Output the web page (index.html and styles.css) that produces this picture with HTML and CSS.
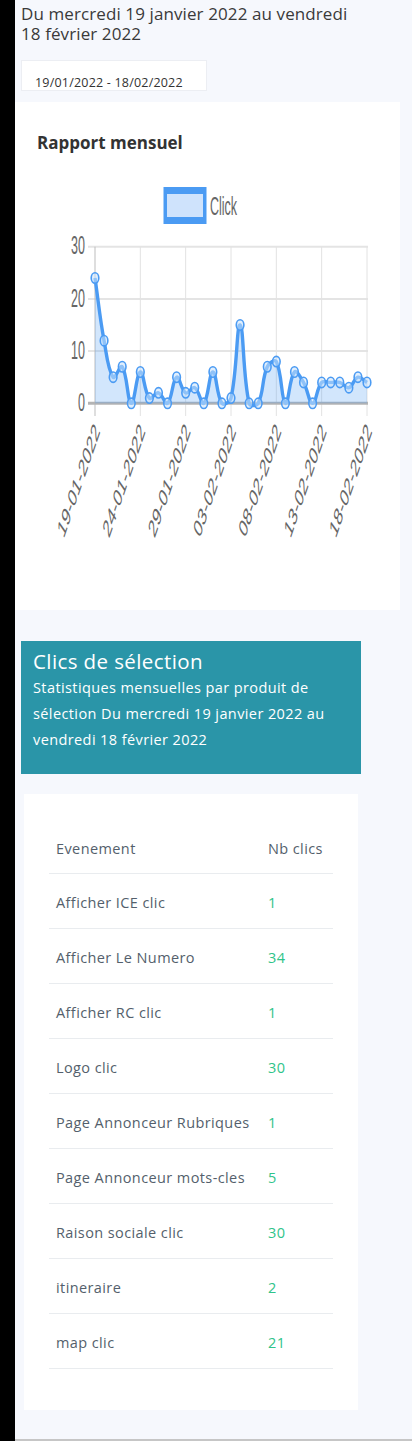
FILE: index.html
```html
<!DOCTYPE html>
<html lang="fr">
<head>
<meta charset="utf-8">
<meta name="viewport" content="width=device-width, initial-scale=1">
<title>Rapport mensuel</title>
<link rel="stylesheet" href="styles.css">
</head>
<body>
<div class="frame">
  <aside class="strip"></aside>
  <main class="main">
    <h1 class="period">Du mercredi 19 janvier 2022 au vendredi 18 février 2022</h1>
    <div class="range">19/01/2022 - 18/02/2022</div>

    <section class="card chart-card">
      <h2 class="card-title">Rapport mensuel</h2>
      <svg class="chart" id="chart" viewBox="15 170 385 400" xmlns="http://www.w3.org/2000/svg">
        <g class="legend">
          <rect x="163.5" y="187" width="43" height="37" class="legend-outer"/>
          <rect x="167" y="194" width="36" height="23" class="legend-inner"/>
          <text class="lbl" transform="translate(210,206) scale(1,2.05)" dy="0.36em">Click</text>
        </g>
        <g class="grid">
          <line x1="88" y1="246.7" x2="368" y2="246.7" class="gh"/>
          <line x1="88" y1="298.9" x2="368" y2="298.9" class="gh"/>
          <line x1="88" y1="351.1" x2="368" y2="351.1" class="gh"/>
          <line x1="140.33" y1="246.7" x2="140.33" y2="416" class="gv"/>
          <line x1="185.67" y1="246.7" x2="185.67" y2="416" class="gv"/>
          <line x1="231" y1="246.7" x2="231" y2="416" class="gv"/>
          <line x1="276.33" y1="246.7" x2="276.33" y2="416" class="gv"/>
          <line x1="321.67" y1="246.7" x2="321.67" y2="416" class="gv"/>
          <line x1="367" y1="246.7" x2="367" y2="416" class="gv"/>
          <line x1="95" y1="246.7" x2="95" y2="416" class="gaxis"/>
          <line x1="88" y1="403.3" x2="368" y2="403.3" class="gzero"/>
        </g>
        <g class="yl">
          <text class="lbl" text-anchor="end" transform="translate(85,245) scale(1,2.05)" dy="0.36em">30</text>
          <text class="lbl" text-anchor="end" transform="translate(85,298) scale(1,2.05)" dy="0.36em">20</text>
          <text class="lbl" text-anchor="end" transform="translate(85,350) scale(1,2.05)" dy="0.36em">10</text>
          <text class="lbl" text-anchor="end" transform="translate(85,402) scale(1,2.05)" dy="0.36em">0</text>
        </g>
        <g class="xl">
          <text class="lbl" text-anchor="end" transform="translate(93,421) scale(1,2.05) rotate(-55)" dy="0.72em">19-01-2022</text>
          <text class="lbl" text-anchor="end" transform="translate(138.3,421) scale(1,2.05) rotate(-55)" dy="0.72em">24-01-2022</text>
          <text class="lbl" text-anchor="end" transform="translate(183.7,421) scale(1,2.05) rotate(-55)" dy="0.72em">29-01-2022</text>
          <text class="lbl" text-anchor="end" transform="translate(229,421) scale(1,2.05) rotate(-55)" dy="0.72em">03-02-2022</text>
          <text class="lbl" text-anchor="end" transform="translate(274.3,421) scale(1,2.05) rotate(-55)" dy="0.72em">08-02-2022</text>
          <text class="lbl" text-anchor="end" transform="translate(319.7,421) scale(1,2.05) rotate(-55)" dy="0.72em">13-02-2022</text>
          <text class="lbl" text-anchor="end" transform="translate(365,421) scale(1,2.05) rotate(-55)" dy="0.72em">18-02-2022</text>
        </g>
        <g id="series"></g>
      </svg>
    </section>

    <section class="banner">
      <h3 class="banner-title">Clics de sélection</h3>
      <p class="banner-text">Statistiques mensuelles par produit de sélection Du mercredi 19 janvier 2022 au vendredi 18 février 2022</p>
    </section>

    <section class="card table-card">
      <table class="stats">
        <colgroup><col class="c1"><col class="c2"></colgroup>
        <thead>
          <tr><th>Evenement</th><th>Nb clics</th></tr>
        </thead>
        <tbody>
          <tr><td>Afficher ICE clic</td><td class="num">1</td></tr>
          <tr><td>Afficher Le Numero</td><td class="num">34</td></tr>
          <tr><td>Afficher RC clic</td><td class="num">1</td></tr>
          <tr><td>Logo clic</td><td class="num">30</td></tr>
          <tr><td>Page Annonceur Rubriques</td><td class="num">1</td></tr>
          <tr><td>Page Annonceur mots-cles</td><td class="num">5</td></tr>
          <tr><td>Raison sociale clic</td><td class="num">30</td></tr>
          <tr><td>itineraire</td><td class="num">2</td></tr>
          <tr><td>map clic</td><td class="num">21</td></tr>
        </tbody>
      </table>
    </section>
  </main>
</div>
<script src="script.js"></script>
</body>
</html>
```

FILE: styles.css
```css
* { box-sizing: border-box; }
html, body { margin: 0; padding: 0; }
body {
  background: #f6f8fd;
  font-family: "Open Sans", "Noto Sans", sans-serif;
  color: #3a3a3a;
}
.frame { display: flex; height: 1441px; }
.strip { flex: none; width: 15px; background: #000; }
.main {
  flex: 1;
  border-bottom: 2px solid #c6c6c6;
}
.period {
  margin: 0;
  padding: 4px 0 0 6px;
  max-width: 346px;
  font-size: 17px;
  line-height: 20px;
  letter-spacing: 0.1px;
  font-weight: 400;
  color: #3a3a3a;
}
.range {
  margin: 16px 0 0 6px;
  width: 186px;
  height: 31px;
  background: #fff;
  border: 1px solid #eceef3;
  padding: 14px 0 0 13px;
  font-size: 12.5px;
  line-height: 16px;
  letter-spacing: 0.2px;
  color: #333;
}
.card { background: #fff; }
.chart-card {
  margin-top: 11px;
  width: 385px;
  height: 508px;
  padding-top: 29px;
}
.card-title {
  margin: 0 0 15px 22px;
  font-size: 17px;
  line-height: 24px;
  font-weight: 700;
  color: #333;
}
.chart { display: block; width: 385px; height: 400px; }
.lbl { font-family: "Liberation Sans", Arial, sans-serif; font-size: 12.5px; fill: #666; }
.legend-outer { fill: #4b9bf3; }
.legend-inner { fill: #cfe3fc; }
.gh { stroke: #e4e4e4; stroke-width: 2; }
.gv { stroke: #e2e2e2; stroke-width: 1; }
.gaxis { stroke: #bdbdbd; stroke-width: 1; }
.gzero { stroke: #b4b4b4; stroke-width: 3; }
.area { fill: rgba(75, 155, 243, 0.25); stroke: none; }
.line { fill: none; stroke: #4b9bf3; stroke-width: 3.4; stroke-linejoin: round; }
.pt { fill: rgba(200, 226, 252, 0.55); stroke: #4b9bf3; stroke-width: 1.6; }

.banner {
  margin: 31px 0 0 6px;
  width: 340px;
  background: #2a95a8;
  color: #fff;
  padding: 8px 12px 21px;
}
.banner-title {
  margin: 0;
  font-size: 20.5px;
  line-height: 24px;
  letter-spacing: 0.4px;
  font-weight: 400;
}
.banner-text {
  margin: 2px 0 0;
  font-size: 14.5px;
  line-height: 26px;
  letter-spacing: 0.4px;
}
.table-card {
  margin: 20px 0 0 9px;
  width: 334px;
  padding: 30px 25px 41px;
}
.stats {
  width: 284px;
  border-collapse: collapse;
  table-layout: fixed;
  font-size: 14.5px;
  letter-spacing: 0.4px;
  color: #545f6c;
}
.c1 { width: 212px; }
.c2 { width: 72px; }
.stats th, .stats td {
  text-align: left;
  padding: 0 7px;
  border-bottom: 1px solid #e9ecef;
  white-space: nowrap;
}
.stats th { font-weight: 400; height: 49px; vertical-align: middle; padding-top: 1px; }
.stats td { height: 55px; padding-top: 4px; }
.stats .num { color: #2fc48a; }
```

FILE: script.js
```js
(function () {
  var data = [24, 12, 5, 7, 0, 6, 1, 2, 0, 5, 2, 3, 0, 6, 0, 1, 15, 0, 0, 7, 8, 0, 6, 4, 0, 4, 4, 4, 3, 5, 4];
  var x0 = 95, dx = 272 / 30, y0 = 403.3, k = 5.22;
  var pts = data.map(function (v, i) { return [x0 + i * dx, y0 - v * k]; });
  var ns = "http://www.w3.org/2000/svg";
  function cps(i) {
    var p0 = pts[i - 1] || pts[i], p1 = pts[i], p2 = pts[i + 1] || pts[i];
    var d01 = Math.hypot(p1[0] - p0[0], p1[1] - p0[1]);
    var d12 = Math.hypot(p2[0] - p1[0], p2[1] - p1[1]);
    var s01 = d01 / (d01 + d12), s12 = d12 / (d01 + d12);
    if (!isFinite(s01)) s01 = 0;
    if (!isFinite(s12)) s12 = 0;
    var fa = 0.4 * s01, fb = 0.4 * s12;
    return {
      prev: [p1[0] - fa * (p2[0] - p0[0]), p1[1] - fa * (p2[1] - p0[1])],
      next: [p1[0] + fb * (p2[0] - p0[0]), p1[1] + fb * (p2[1] - p0[1])]
    };
  }
  var c = pts.map(function (_, i) { return cps(i); });
  function f(n) { return n.toFixed(2); }
  var d = "M" + f(pts[0][0]) + " " + f(pts[0][1]);
  for (var i = 0; i < pts.length - 1; i++) {
    var a = c[i].next, b = c[i + 1].prev, p = pts[i + 1];
    d += " C" + f(a[0]) + " " + f(a[1]) + " " + f(b[0]) + " " + f(b[1]) + " " + f(p[0]) + " " + f(p[1]);
  }
  var g = document.getElementById("series");
  var area = document.createElementNS(ns, "path");
  area.setAttribute("d", d + " L" + f(pts[pts.length - 1][0]) + " " + y0 + " L" + f(pts[0][0]) + " " + y0 + " Z");
  area.setAttribute("class", "area");
  g.appendChild(area);
  var line = document.createElementNS(ns, "path");
  line.setAttribute("d", d);
  line.setAttribute("class", "line");
  g.appendChild(line);
  pts.forEach(function (p) {
    var e = document.createElementNS(ns, "ellipse");
    e.setAttribute("cx", f(p[0]));
    e.setAttribute("cy", f(p[1]));
    e.setAttribute("rx", "3.8");
    e.setAttribute("ry", "5.2");
    e.setAttribute("class", "pt");
    g.appendChild(e);
  });
})();
```
